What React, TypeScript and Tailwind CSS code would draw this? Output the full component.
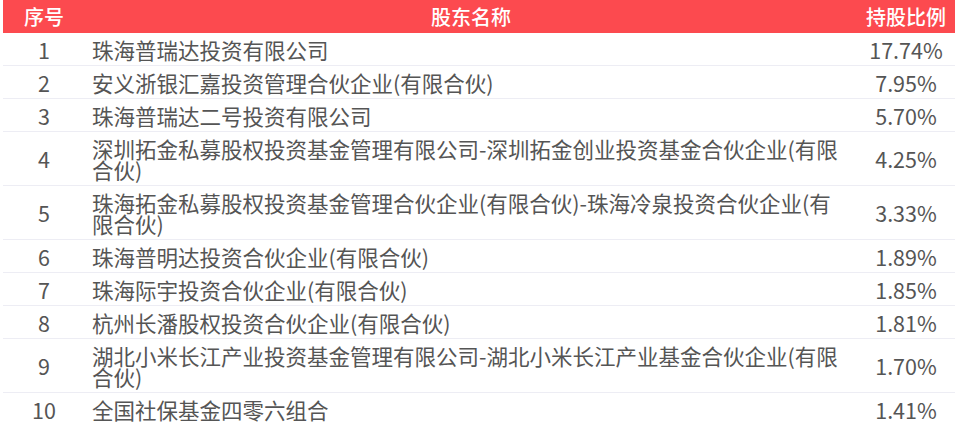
import React from "react";

const rows: [string, string, string][] = [
  ["1", "珠海普瑞达投资有限公司", "17.74%"],
  ["2", "安义浙银汇嘉投资管理合伙企业(有限合伙)", "7.95%"],
  ["3", "珠海普瑞达二号投资有限公司", "5.70%"],
  ["4", "深圳拓金私募股权投资基金管理有限公司-深圳拓金创业投资基金合伙企业(有限合伙)", "4.25%"],
  ["5", "珠海拓金私募股权投资基金管理合伙企业(有限合伙)-珠海冷泉投资合伙企业(有限合伙)", "3.33%"],
  ["6", "珠海普明达投资合伙企业(有限合伙)", "1.89%"],
  ["7", "珠海际宇投资合伙企业(有限合伙)", "1.85%"],
  ["8", "杭州长潘股权投资合伙企业(有限合伙)", "1.81%"],
  ["9", "湖北小米长江产业投资基金管理有限公司-湖北小米长江产业基金合伙企业(有限合伙)", "1.70%"],
  ["10", "全国社保基金四零六组合", "1.41%"],
];

export default function App() {
  return (
    <div
      className="w-[960px] h-[424px] overflow-hidden bg-white"
      style={{ fontFamily: '"Noto Sans CJK SC", "Noto Sans", sans-serif' }}
    >
      <div className="ml-[3px] w-[952px]">
        <div className="flex h-[33px] items-center bg-[#fc4a4f] text-white text-[20px] font-medium leading-[20px]">
          <div className="w-[82px] text-center">序号</div>
          <div className="w-[772px] text-center">股东名称</div>
          <div className="w-[98px] text-center">持股比例</div>
        </div>
        {rows.map(([n, name, pct]) => (
          <div
            key={n}
            className="flex items-center border-b border-[#ededf4] text-[#555555] text-[21.5px] leading-[21px]"
          >
            <div className="w-[82px] shrink-0 text-center">{n}</div>
            <div className="w-[772px] shrink-0 px-[7px] py-[5.5px]">{name}</div>
            <div className="w-[98px] shrink-0 text-center">{pct}</div>
          </div>
        ))}
      </div>
    </div>
  );
}
